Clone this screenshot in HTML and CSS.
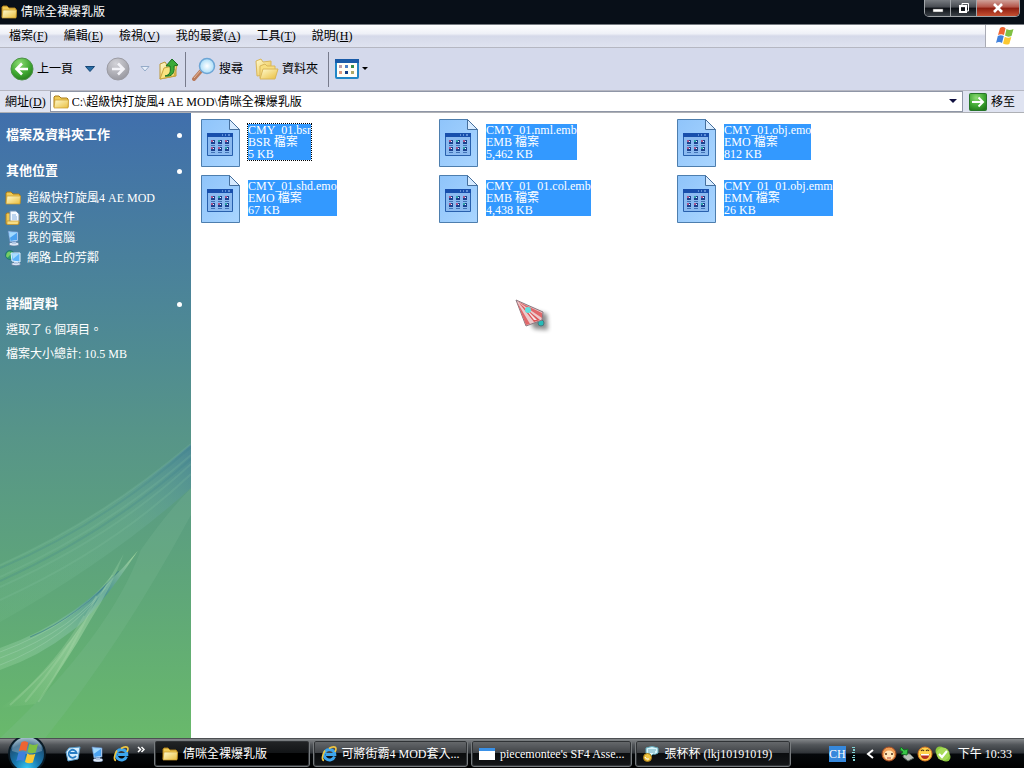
FILE: index.html
```html
<!DOCTYPE html>
<html lang="zh-Hant">
<head>
  <meta charset="UTF-8" />
  <title>倩咪全裸爆乳版</title>
  <meta name="viewport" content="width=device-width, initial-scale=1.0" />
  <link rel="stylesheet" href="styles.css">
</head>
<body>
  <svg class="sprite" aria-hidden="true">
    <defs>
      <linearGradient id="gold" x1="0" y1="0" x2="1" y2="1"><stop offset="0" stop-color="#fffbd0"/><stop offset="1" stop-color="#e9bd3c"/></linearGradient>
      <linearGradient id="paper" x1="0" y1="0" x2="1" y2="1"><stop offset="0" stop-color="#8fc4fa"/><stop offset="1" stop-color="#a9d5ff"/></linearGradient>
      <radialGradient id="green" cx=".4" cy=".25" r=".8"><stop offset="0" stop-color="#8ddb74"/><stop offset=".6" stop-color="#3fa832"/><stop offset="1" stop-color="#237a1b"/></radialGradient>
      <radialGradient id="grey" cx=".4" cy=".25" r=".8"><stop offset="0" stop-color="#d2d2d8"/><stop offset="1" stop-color="#96969e"/></radialGradient>
      <radialGradient id="orb" cx=".5" cy=".9" r=".9"><stop offset="0" stop-color="#38c8f4"/><stop offset=".4" stop-color="#1877ae"/><stop offset=".75" stop-color="#1d5278"/><stop offset="1" stop-color="#a5c0cf"/></radialGradient>
      <radialGradient id="lens"><stop offset="0" stop-color="#fff"/><stop offset="1" stop-color="#a8dcf8"/></radialGradient>
    </defs>
    <symbol id="folder" viewBox="0 0 16 16">
      <path d="M1 13V3l1-1h4l2 2h6l1 1v8z" fill="#f0cb55" stroke="#a87b18"/>
      <path d="M1 14l1-8h13.500l-.5 8z" fill="url(#gold)" stroke="#c99a2a" stroke-width=".7"/>
    </symbol>
    <symbol id="docs" viewBox="0 0 16 16">
      <path d="M1 14V4l1-1h3l1 1h7l1 1v9z" fill="#efc852" stroke="#ad7e20"/>
      <path d="M5 1h6l3 3v8H5z" fill="#f6faff" stroke="#6f91b8"/>
      <path d="M7 5h4M7 7h5M7 9h5" stroke="#82aee0"/>
      <path d="M2 11h12l-1 3.500H2z" fill="#f7dd83" stroke="#bf922d" stroke-width=".7"/>
    </symbol>
    <symbol id="computer" viewBox="0 0 16 16">
      <ellipse cx="9" cy="14" rx="5" ry="2" fill="#dce7f5" stroke="#4e668b" stroke-width=".6"/>
      <path d="M7 11h4v3H7z" fill="#b4c8e4"/>
      <path d="M3 1l10 1v9l-8 1z" fill="#d3eaff" stroke="#5382bd" stroke-width=".7"/>
      <path d="M4 2l8 .8v7.200L5.500 11z" fill="#4ba2f0"/>
      <path d="M4 2l8 .8-7 5z" fill="#a2daff"/>
    </symbol>
    <symbol id="network" viewBox="0 0 16 16">
      <circle cx="5" cy="5" r="4.500" fill="#2f9c69" stroke="#155f70" stroke-width=".6"/>
      <path d="M2 3c3-3 5 0 3 2S3 9 1 6z" fill="#77cc64"/>
      <ellipse cx="11" cy="14" rx="4.500" ry="1.700" fill="#dce7f5" stroke="#4e668b" stroke-width=".6"/>
      <path d="M9 11h4v3H9z" fill="#b4c8e4"/>
      <path d="M6 3h9v9l-8-1z" fill="#5cb4fa" stroke="#e4f3ff"/>
      <path d="M7 4h7l-6 5z" fill="#a9ddff"/>
    </symbol>
    <symbol id="flag" viewBox="0 0 20 20">
      <path d="M5 2c2-1.500 4-1 5.500.2L9 9C7 7.800 5 8 3 9z" fill="#ee6432"/>
      <path d="M11.500 3c2 1.200 4 1.300 7 0l-2 7c-2.500 1-4.500.8-6.500-.4z" fill="#7fc043"/>
      <path d="M2.800 10c2-1.200 4-1 6 0L7 17c-2-1.200-4-1.200-6 0z" fill="#3f80dc"/>
      <path d="M9.800 10.700c2 1.200 4 1.300 6.500.3l-2 7c-2.200 1-4.400.7-6.300-.4z" fill="#fbc832"/>
    </symbol>
    <symbol id="ie" viewBox="0 0 16 16">
      <path d="M13.500 10.500A5.300 5.300 0 1 1 13.800 8.500H5" fill="none" stroke="#3da6ee" stroke-width="3"/>
      <path d="M4 4.500C1 9 .5 14 3 14.500M8 2.500c3-2 7-2.500 7 .5 0 1-.5 2-1 3" fill="none" stroke="#f1c640" stroke-width="1.600"/>
    </symbol>
    <symbol id="file" viewBox="0 0 39 48">
      <path d="M.5.500h28l10 10v37H.5z" fill="url(#paper)" stroke="#4d7eae"/>
      <path d="M28.500.500v10h10z" fill="#d7ebff" stroke="#456f9d"/>
      <path d="M6.500 15.500h25v21h-25z" fill="#8bbaf0" stroke="#2860ad"/>
      <path d="M6 14h26v4H6z" fill="#184fac"/>
      <path d="M21 16h1M24 16h1M27 16h2" stroke="#a6d0ff"/>
      <path d="M10 21h4v4h-4zM17 21h4v4h-4zM24 21h4v4h-4zM10 28h4v4h-4zM17 28h4v4h-4zM24 28h4v4h-4z" fill="#1c418e"/>
      <path d="M10 21h2v2h-2zM24 21h2v2h-2zM10 28h2v2h-2zM17 28h2v2h-2z" fill="#a6548c"/>
      <path d="M17 21h2v2h-2zM24 28h2v2h-2z" fill="#2ca0a4"/>
      <path d="M12 22h1v1h-1zM19 22h1v1h-1zM26 22h1v1h-1zM12 29h1v1h-1zM19 29h1v1h-1zM26 29h1v1h-1z" fill="#e5f5ff"/>
      <path d="M10 26.500h4M17 26.500h4M24 26.500h4M10 33.500h4M17 33.500h4M24 33.500h4" stroke="#4173b6"/>
    </symbol>
  </svg>

  <header class="titlebar">
    <svg class="icon"><use href="#folder"/></svg>
    <h1>倩咪全裸爆乳版</h1>
    <div class="window-buttons">
      <button aria-label="最小化"><svg width="12" height="12"><path d="M1 7h10v3H1z" fill="#fff" stroke="#555" stroke-width=".5"/></svg></button>
      <button aria-label="還原"><svg width="12" height="12" fill="none" stroke="#fff"><path d="M4 3V1.500h6.500V9H9" /><path d="M2 4h6v6H2z" stroke-width="2"/></svg></button>
      <button class="close" aria-label="關閉"><svg width="12" height="12"><path d="M2 2l8 8M10 2l-8 8" stroke="#fff" stroke-width="2.600"/></svg></button>
    </div>
  </header>

  <nav class="menubar">
    <button>檔案(<u>F</u>)</button>
    <button>編輯(<u>E</u>)</button>
    <button>檢視(<u>V</u>)</button>
    <button>我的最愛(<u>A</u>)</button>
    <button>工具(<u>T</u>)</button>
    <button>說明(<u>H</u>)</button>
    <span class="brand"><svg width="20" height="20"><use href="#flag"/></svg></span>
  </nav>

  <div class="toolbar">
    <button class="back">
      <svg width="24" height="24" viewBox="0 0 24 24"><circle cx="12" cy="12" r="11" fill="url(#green)" stroke="#4d9147"/><path d="M18 12H7M12 6.500L6.500 12l5.500 5.500" fill="none" stroke="#fff" stroke-width="2.600"/></svg>
      上一頁
    </button>
    <button class="drop" aria-label="返回清單"><svg width="10" height="6"><path d="M.5.500h9L5 5.500z" fill="#286da5" stroke="#174777"/></svg></button>
    <button aria-label="下一頁"><svg width="24" height="24" viewBox="0 0 24 24"><circle cx="12" cy="12" r="11" fill="url(#grey)" stroke="#9b9ba3"/><path d="M6 12h11M12 6.500l5.500 5.500-5.500 5.500" fill="none" stroke="#f3f3f8" stroke-width="2.600"/></svg></button>
    <button class="drop" aria-label="前進清單"><svg width="10" height="6"><path d="M1 .5h8L5 5z" fill="#e7effa" stroke="#95abc8"/></svg></button>
    <button aria-label="往上">
      <svg width="20" height="24" viewBox="0 0 20 24"><path d="M1 22V7l5-2 2 3 9-2v13z" fill="url(#gold)" stroke="#bd9736"/><path d="M1 22l4-11 13-3-3 11z" fill="#f9e37f" stroke="#c9a53e"/><path d="M6 19c5-1 6-4 5-10H7l6-7 6 6-4 1c1 7-2 11-9 10z" fill="#3aaa38" stroke="#187021"/></svg>
    </button>
    <span class="separator"></span>
    <button>
      <svg width="24" height="24" viewBox="0 0 24 24"><path d="M9 14l-7 8" stroke="#b97b5c" stroke-width="4" stroke-linecap="round"/><path d="M9 13l-7 8" stroke="#e6b79a"/><circle cx="15" cy="9" r="7.500" fill="url(#lens)" stroke="#6da5d5" stroke-width="1.500"/></svg>
      搜尋
    </button>
    <button class="folders">
      <svg width="24" height="24" viewBox="0 0 24 24"><path d="M2 19L1 4l5-2 2 3 8-1v13z" fill="url(#gold)" stroke="#d9b65a"/><path d="M5 21V9l5-2 2 2h8v12z" fill="#f8df80" stroke="#d9b65a"/><path d="M5 22l3-10h15l-3 10z" fill="url(#gold)" stroke="#d9b65a"/></svg>
      資料夾
    </button>
    <span class="separator"></span>
    <button aria-label="檢視方式">
      <svg width="24" height="20" viewBox="0 0 24 20"><rect x="1" y="1" width="22" height="18" rx="1" fill="#fffef7" stroke="#2186c7" stroke-width="2"/><path d="M0 0h24v4H0z" fill="#195ba8"/><path d="M4 6h3v3H4z" fill="#b99bab"/><path d="M10 6h3v3h-3z" fill="#4b80c8"/><path d="M16 6h3v3h-3z" fill="#378d48"/><path d="M4 12h3v3H4z" fill="#db987f"/><path d="M10 12h3v3h-3z" fill="#153e85"/><path d="M16 12h3v3h-3z" fill="#aba96a"/></svg>
      <svg width="6" height="4"><path d="M0 0h6L3 3z"/></svg>
    </button>
  </div>

  <div class="addressbar">
    <label for="address">網址(<u>D</u>)</label>
    <div class="combo">
      <svg class="icon"><use href="#folder"/></svg>
      <input type="text" id="address" value="C:\超級快打旋風4 AE MOD\倩咪全裸爆乳版">
      <button aria-label="網址清單"><svg width="8" height="5"><path d="M0 0h8L4 4z" fill="#101040"/></svg></button>
    </div>
    <button class="go">
      <svg width="18" height="18"><rect x=".5" y=".5" width="17" height="17" rx="1" fill="url(#green)" stroke="#28772a"/><path d="M3 9h11M9.500 4.500L14 9l-4.500 4.500" fill="none" stroke="#fff" stroke-width="2"/></svg>
      移至
    </button>
  </div>

  <div class="content">
    <aside class="sidebar">
      <svg class="swoosh" viewBox="0 0 190 308" preserveAspectRatio="none" aria-hidden="true">
        <defs>
          <linearGradient id="wave" x1="0" y1="1" x2="1" y2="0"><stop offset="0" stop-color="#8bd0a0" stop-opacity=".1"/><stop offset=".6" stop-color="#78b8a0" stop-opacity=".25"/><stop offset="1" stop-color="#427f9e" stop-opacity=".6"/></linearGradient>
          <linearGradient id="ray" x1="0" y1="1" x2="1" y2="0"><stop offset="0" stop-color="#a8dda0" stop-opacity="0"/><stop offset=".5" stop-color="#b2e0b0" stop-opacity=".5"/><stop offset="1" stop-color="#9bd3a8" stop-opacity=".3"/></linearGradient>
          <linearGradient id="blade" x1="0" y1="1" x2="1" y2="0"><stop offset="0" stop-color="#a4dca8" stop-opacity=".3"/><stop offset=".4" stop-color="#88c4a8" stop-opacity=".5"/><stop offset=".7" stop-color="#4b9295" stop-opacity=".9"/><stop offset="1" stop-color="#a6d99b"/></linearGradient>
        </defs>
        <path d="M0 135Q100 90 190 14V58Q110 130 0 192z" fill="url(#wave)"/>
        <path d="M190 58V85Q120 215 45 308H0Q110 205 140 120Q165 84 190 58z" fill="#8bc3a0" opacity=".18"/>
        <path d="M0 135Q100 90 190 14M0 147Q104 100 190 25M0 157Q110 108 190 34M0 170Q110 120 190 44" fill="none" stroke="#8bc5a6" stroke-width="2" opacity=".18"/>
        <path d="M0 138Q102 95 190 17M0 151Q105 104 190 29" fill="none" stroke="#397b8e" stroke-width="2" opacity=".2"/>
        <path d="M0 218Q80 190 137 121Q95 185 70 202Q40 226 0 240z" fill="url(#blade)"/>
        <path d="M0 222Q75 194 112 145M0 228Q75 200 112 148M0 235Q65 210 105 158" fill="none" stroke="#a4d5b4" opacity=".4"/>
        <path d="M30 207Q80 186 118 141" fill="none" stroke="#34768d" opacity=".6"/>
        <path d="M0 278Q60 240 108 150L123 124Q112 155 90 190Q65 235 35 274z" fill="url(#ray)"/>
        <path d="M10 275Q60 230 84 186M25 272Q65 225 90 178M38 272Q70 225 96 166" fill="none" stroke="#b7dfb4" stroke-width="2" opacity=".25"/>
      </svg>
      <section>
        <h2>檔案及資料夾工作</h2>
      </section>
      <section>
        <h2>其他位置</h2>
        <ul>
          <li><a href="#"><svg class="icon"><use href="#folder"/></svg>超級快打旋風4 AE MOD</a></li>
          <li><a href="#"><svg class="icon"><use href="#docs"/></svg>我的文件</a></li>
          <li><a href="#"><svg class="icon"><use href="#computer"/></svg>我的電腦</a></li>
          <li><a href="#"><svg class="icon"><use href="#network"/></svg>網路上的芳鄰</a></li>
        </ul>
      </section>
      <section class="details">
        <h2>詳細資料</h2>
        <p>選取了 6 個項目。</p>
        <p>檔案大小總計: 10.5 MB</p>
      </section>
    </aside>

    <main class="files">
      <div class="file focused"><svg><use href="#file"/></svg><p>CMY_01.bsr<br>BSR 檔案<br>5 KB</p></div>
      <div class="file"><svg><use href="#file"/></svg><p>CMY_01.nml.emb<br>EMB 檔案<br>5,462 KB</p></div>
      <div class="file"><svg><use href="#file"/></svg><p>CMY_01.obj.emo<br>EMO 檔案<br>812 KB</p></div>
      <div class="file"><svg><use href="#file"/></svg><p>CMY_01.shd.emo<br>EMO 檔案<br>67 KB</p></div>
      <div class="file"><svg><use href="#file"/></svg><p>CMY_01_01.col.emb<br>EMB 檔案<br>4,438 KB</p></div>
      <div class="file"><svg><use href="#file"/></svg><p>CMY_01_01.obj.emm<br>EMM 檔案<br>26 KB</p></div>
    </main>
  </div>

  <footer class="taskbar">
    <button class="start" aria-label="開始">
      <svg width="38" height="38" viewBox="0 0 38 38"><circle cx="19" cy="19" r="18" fill="url(#orb)" stroke="#0a1b26" stroke-width="2"/><path d="M4 16a15 14 0 0 1 30 0q-15 6-30 0z" fill="#fff" opacity=".25"/><use href="#flag" x="7" y="5" width="25" height="25"/></svg>
    </button>
    <div class="quick">
      <button aria-label="Outlook Express"><svg class="icon" viewBox="0 0 16 16"><path d="M4 2l11-1-2 12-10 2-2-9z" fill="#d7efff" stroke="#599cca"/><path d="M11 10a4 4 0 1 1 .6-3H5" fill="none" stroke="#267dc3" stroke-width="1.800"/></svg></button>
      <button aria-label="顯示桌面"><svg class="icon"><use href="#computer"/></svg></button>
      <button aria-label="Internet Explorer"><svg class="icon"><use href="#ie"/></svg></button>
      <button class="more" aria-label="更多"><svg width="8" height="7" fill="none" stroke="#fff" stroke-width="1.500"><path d="M1 1l2.500 2.500L1 6M4.500 1L7 3.500 4.500 6"/></svg></button>
    </div>
    <div class="tasks">
      <button class="active"><svg class="icon"><use href="#folder"/></svg>倩咪全裸爆乳版</button>
      <button><svg class="icon"><use href="#ie"/></svg>可將街霸4 MOD套入...</button>
      <button><svg class="icon" viewBox="0 0 16 16"><path d="M0 2h16v12H0z" fill="#fff"/><path d="M0 2h16v3H0z" fill="#3a91e8"/></svg>piecemontee's SF4 Asse...</button>
      <button><svg class="icon" viewBox="0 0 16 16"><path d="M3 2q6-3 12 0v5q-3 2-5 1l-3 3V8L3 7z" fill="#d9f5fc" stroke="#60a9b9"/><path d="M5 4h8M5 6h7" stroke="#68a8b7"/><circle cx="4.500" cy="11.500" r="4" fill="#f1c642" stroke="#a87b19"/><path d="M2 11q1 3 4 2" stroke="#fff" fill="none"/></svg>張杯杯 (lkj10191019)</button>
    </div>
    <div class="tray">
      <button class="lang">CH</button>
      <svg class="grip" width="4" height="14"><path d="M0 0h3v1H0zM1 2h2v2H1zM0 5h3v1H0zM1 8h2v1H1zM0 10h3v1H0zM1 12h2v2H1z" fill="#82d4d4"/></svg>
      <button class="expand" aria-label="顯示隱藏的圖示"><svg width="8" height="10"><path d="M7 1L2 5l5 4" fill="none" stroke="#fff" stroke-width="2"/></svg></button>
      <svg class="icon" viewBox="0 0 16 16"><circle cx="8" cy="8" r="7" fill="#ef9d54" stroke="#a34a22"/><ellipse cx="8" cy="9" rx="5" ry="4.500" fill="#ffe5b8"/><path d="M5 7v2M11 7v2" stroke="#563019" stroke-width="1.500"/><path d="M6 12h4" stroke="#ba3e28"/></svg>
      <svg class="icon" viewBox="0 0 16 16"><path d="M5 7l6 1 4 4-6 3-5-4z" fill="#b7beb7" stroke="#59645f"/><path d="M2 1l3 3 4-1-1 6-6-1 2-2-3-2z" fill="#37c646" stroke="#176d25"/></svg>
      <svg class="icon" viewBox="0 0 16 16"><circle cx="8" cy="8" r="7" fill="#ffd34d" stroke="#da7825"/><path d="M4 5q1.500-2 3 0M9 5q1.500-2 3 0" fill="none" stroke="#503213" stroke-width="1.200"/><path d="M3.500 8h9q-.5 5-4.500 5T3.500 8z" fill="#b92e20"/><path d="M4 8h8v1.500H4z" fill="#fff"/></svg>
      <svg class="icon" viewBox="0 0 16 16"><circle cx="5" cy="5" r="4.500" fill="#8bc93d"/><circle cx="11" cy="11" r="4.500" fill="#8bc93d"/><circle cx="8" cy="8" r="6.500" fill="#a5da56"/><path d="M4 8l3 3 5-6" fill="none" stroke="#fff" stroke-width="2.200"/></svg>
      <time>下午 10:33</time>
    </div>
  </footer>

  <svg class="pointer" width="40" height="40" viewBox="0 0 40 40" aria-hidden="true">
    <path class="pointer-shadow" d="M8 10l24 6 1 16-14-1z" fill="#000" opacity=".45"/>
    <circle cx="26" cy="25" r="3" fill="#27bcb9" stroke="#477b7e"/>
    <path d="M1 2l27 12-1 8-16 6z" fill="#ecc9cb" stroke="#8b7780"/>
    <path d="M2 3l25 12v5zM2 4l13 22-4 1z" fill="#e0686a"/>
    <path d="M4 5l21 17-6 2z" fill="#da5557"/>
    <path d="M8 8l14 14h-3z" fill="#f4e4e4"/>
    <circle cx="13" cy="12" r="3" fill="#5fe0de"/>
  </svg>
</body>
</html>
```
FILE: styles.css
```css
* {
  box-sizing: border-box;
}
body {
  display: flex;
  flex-direction: column;
  height: 100vh;
  margin: 0;
  overflow: hidden;
  background: #fff;
  color: #000;
  font-family: "Liberation Serif", "Noto Sans CJK TC", serif;
  font-size: 12px;
  line-height: 16px;
}
button, input {
  margin: 0;
  padding: 0;
  border: none;
  background: none;
  color: inherit;
  font: inherit;
}
button {
  display: flex;
  align-items: center;
  white-space: nowrap;
}
h1, h2, p, ul {
  margin: 0;
  padding: 0;
  font-size: 12px;
}
svg {
  flex: none;
}
.sprite {
  position: absolute;
  width: 0;
  height: 0;
}
.icon {
  width: 16px;
  height: 16px;
}

/* title bar */
.titlebar {
  display: flex;
  align-items: center;
  gap: 4px;
  height: 25px;
  padding-left: 1px;
  background: #080f18;
  border-bottom: 1px solid #777c82;
  color: #fff;
}
.titlebar h1 {
  font-weight: normal;
}
.window-buttons {
  display: flex;
  align-self: flex-start;
  height: 17px;
  margin-left: auto;
  margin-right: 4px;
  border: 1px solid #a2a6aa;
  border-top: none;
  border-radius: 0 0 5px 5px;
  overflow: hidden;
}
.window-buttons button {
  justify-content: center;
  width: 26px;
  background: linear-gradient(#777b80, #464a50 45%, #090d12 50%, #3c4249);
  border-right: 1px solid #a2a6aa;
}
.window-buttons .close {
  width: 42px;
  border: none;
  background: linear-gradient(#d0a29a, #b35347 45%, #8d1d10 50%, #c65032);
}

/* menu */
.menubar {
  display: flex;
  align-items: center;
  gap: 16px;
  height: 23px;
  padding-left: 9px;
  background: linear-gradient(#fff, #eef0f7 40%, #d5d9e9 50%, #dfe3f0);
  border-bottom: 1px solid #b5b7c2;
}
.brand {
  display: flex;
  align-items: center;
  justify-content: center;
  align-self: stretch;
  width: 39px;
  margin-left: auto;
  background: #fff;
  border-left: 1px solid #a9abb5;
}

/* toolbar */
.toolbar {
  display: flex;
  align-items: center;
  height: 43px;
  padding-left: 10px;
  background: #d4d9eb;
  border-bottom: 1px solid #b5b7c2;
}
.toolbar button {
  gap: 3px;
}
.toolbar .drop {
  padding: 0 11px 0 12px;
}
.toolbar .drop + button + .drop {
  padding: 0 9px 0 10px;
}
.separator {
  width: 1px;
  height: 35px;
  margin: 0 6px;
  background: #777b8c;
}
.toolbar .folders {
  margin-left: 12px;
}
.toolbar .folders + .separator {
  margin-left: 10px;
}

/* address bar */
.addressbar {
  display: flex;
  align-items: center;
  height: 22px;
  padding-left: 5px;
  background: #dfe3f1;
  border-bottom: 1px solid #aeb0b5;
}
.combo {
  display: flex;
  flex: 1;
  align-items: center;
  gap: 3px;
  height: 21px;
  margin: 0 6px 0 4px;
  padding: 0 5px 0 2px;
  background: #fff;
  border: 1px solid #8f96a6;
}
.combo input {
  flex: 1;
  min-width: 0;
}
.go {
  gap: 4px;
  padding-right: 9px;
}

/* task pane */
.content {
  display: flex;
  flex: 1;
  min-height: 0;
}
.sidebar {
  position: relative;
  width: 191px;
  padding: 14px 9px 0 6px;
  background: linear-gradient(#406fac, #4f8b92 38%, #579588 52%, #60a977 80%, #69b96b);
  color: #fff;
}
.swoosh {
  position: absolute;
  left: 0;
  bottom: 0;
  width: 100%;
  height: 308px;
}
.sidebar section {
  position: relative;
  margin-bottom: 20px;
}
.sidebar h2 {
  display: flex;
  align-items: center;
  justify-content: space-between;
  font-size: 13px;
}
.sidebar h2::after {
  content: "";
  width: 5px;
  height: 5px;
  border-radius: 50%;
  background: #fff;
}
.sidebar ul {
  margin-top: 9px;
  list-style: none;
}
.sidebar a {
  display: flex;
  align-items: center;
  gap: 6px;
  height: 20px;
  margin-left: -1px;
  color: #fff;
  text-decoration: none;
}
.sidebar .details {
  margin-top: 28px;
}
.sidebar p {
  margin-top: 8px;
}
.sidebar h2 + p {
  margin-top: 10px;
}

/* file tiles */
.files {
  display: grid;
  flex: 1;
  grid-template-columns: repeat(auto-fill, 238px);
  grid-auto-rows: 48px;
  align-content: start;
  row-gap: 8px;
  padding: 6px 0 0 10px;
}
.file {
  display: flex;
  align-items: flex-start;
  gap: 8px;
}
.file svg {
  width: 39px;
  height: 48px;
}
.file p {
  margin-top: 5px;
  background: #3399ff;
  color: #fff;
  line-height: 12px;
  white-space: nowrap;
}
.focused p {
  outline: 1px dotted #000;
}

/* taskbar */
.taskbar {
  display: flex;
  align-items: center;
  height: 30px;
  padding: 0 12px 0 8px;
  background: linear-gradient(#85888b, #52565a 20%, #303439 48%, #05080b 52%, #000);
  border-top: 1px solid #4c4f52;
  color: #fff;
}
.start {
  height: 30px;
}
.quick {
  display: flex;
  align-items: center;
  gap: 8px;
  margin-left: 19px;
}
.quick .more {
  align-self: flex-start;
}
.tasks {
  display: flex;
  flex: 1;
  gap: 3px;
  max-width: 637px;
  margin-left: 9px;
}
.tasks button {
  flex: 1 1 0;
  gap: 5px;
  height: 27px;
  padding: 0 7px;
  border: 1px solid #777b7e;
  border-radius: 3px;
  box-shadow: inset 0 0 0 1px #303336;
  background: linear-gradient(#686b6e, #414448 46%, #0a0c0e 50%, #151719);
}
.tasks .active {
  background: linear-gradient(#222426, #131517 46%, #000 50%);
}
.tray {
  display: flex;
  align-items: center;
  gap: 2px;
  margin-left: auto;
}
.lang {
  height: 16px;
  background: #3688dc;
}
.grip {
  margin: 0 8px 0 4px;
}
.expand {
  margin-right: 5px;
}
.tray time {
  margin-left: 5px;
  white-space: nowrap;
}

.pointer {
  position: absolute;
  left: 515px;
  top: 298px;
}
.pointer-shadow {
  filter: blur(2px);
}
```
